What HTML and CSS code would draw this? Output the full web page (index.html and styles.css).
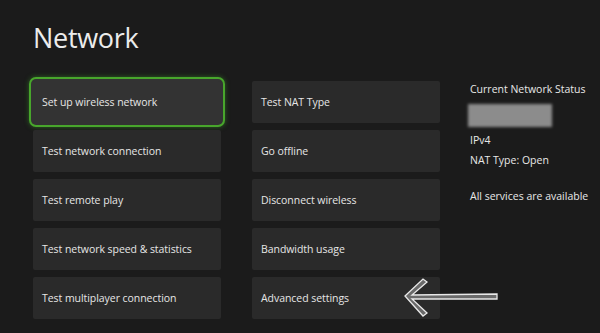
FILE: index.html
```html
<!DOCTYPE html>
<html>
<head>
<meta charset="utf-8">
<link rel="stylesheet" href="styles.css">
</head>
<body>
<div class="page">
  <h1 class="title">Network</h1>
  <div class="grid">
    <div class="col">
      <div class="tile focused">Set up wireless network</div>
      <div class="tile">Test network connection</div>
      <div class="tile">Test remote play</div>
      <div class="tile">Test network speed &amp; statistics</div>
      <div class="tile">Test multiplayer connection</div>
    </div>
    <div class="col">
      <div class="tile">Test NAT Type</div>
      <div class="tile">Go offline</div>
      <div class="tile">Disconnect wireless</div>
      <div class="tile">Bandwidth usage</div>
      <div class="tile">Advanced settings</div>
    </div>
    <div class="status">
      <div class="status-head">Current Network Status</div>
      <div class="blur"></div>
      <div class="status-line">IPv4</div>
      <div class="status-line">NAT Type: Open</div>
      <div class="status-line services">All services are available</div>
    </div>
  </div>
  <svg class="arrow" width="98" height="40" viewBox="0 0 98 40">
    <polygon points="2,18 20,1 24,4 9,17 94,16 94,21 9,21 24,35 20,38" fill="#6a6a6a" stroke="#e8e8e8" stroke-width="1.3" stroke-linejoin="miter"/>
  </svg>
</div>
</body>
</html>
```
FILE: styles.css
```css
* { box-sizing: border-box; }
html, body {
  margin: 0;
  padding: 0;
  background: #1b1b1b;
  width: 600px;
  height: 333px;
  overflow: hidden;
}
.page {
  position: relative;
  width: 600px;
  height: 333px;
  padding: 0 0 0 33px;
  font-family: "Open Sans", "Noto Sans", sans-serif;
  color: #e4e4e4;
}
.title {
  margin: 0;
  padding-top: 19px;
  height: 81px;
  font-size: 27px;
  font-weight: 400;
  line-height: 38px;
  color: #ececec;
  letter-spacing: -0.3px;
}
.grid {
  display: flex;
  gap: 31px;
}
.col {
  display: flex;
  flex-direction: column;
  gap: 7px;
  width: 188px;
  flex: none;
}
.tile {
  height: 42px;
  background: #2a2a2a;
  border-radius: 2px;
  display: flex;
  align-items: center;
  padding-left: 9px;
  font-size: 10.5px;
  letter-spacing: -0.05px;
  color: #e6e6e6;
}
.tile.focused {
  background: #333333;
  box-shadow: 0 0 0 2px #333333, 0 0 0 4px #48a62c, 0 0 5px 4px rgba(60, 160, 40, 0.55);
  border-radius: 3px;
}
.status {
  flex: 1;
  margin-left: -1px;
  font-size: 10.5px;
  color: #e8e8e8;
  white-space: nowrap;
}
.status-head {
  margin-top: 1px;
  line-height: 14px;
}
.blur {
  margin-top: 8px;
  margin-left: -2px;
  width: 84px;
  height: 23px;
  background: #8c8c8c;
  filter: blur(1.5px);
}
.status-line {
  line-height: 14px;
  margin-top: 6px;
}
.status-line.services {
  margin-top: 22px;
}
.arrow {
  position: absolute;
  left: 403px;
  top: 278px;
}
```
